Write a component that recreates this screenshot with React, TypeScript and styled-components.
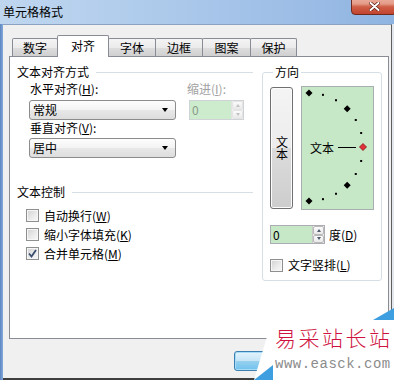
import React from "react";
import styled, { createGlobalStyle } from "styled-components";

const GlobalStyle = createGlobalStyle`
  * { box-sizing: border-box; }
  html, body { margin: 0; padding: 0; background: #ffffff; }
  body {
    font-family: "Noto Sans CJK SC", "Liberation Sans", sans-serif;
    font-size: 12px;
    line-height: 14px;
    color: #000;
  }
`;

const Screen = styled.div`
  position: relative;
  width: 394px;
  height: 380px;
  overflow: hidden;
  display: flex;
  flex-direction: column;
`;

const TitleBar = styled.div`
  height: 24px;
  flex-shrink: 0;
  display: flex;
  align-items: flex-start;
  background: linear-gradient(to right, #bfd6ef 0%, #b0ccec 35%, #a2c1e8 65%, #8fb4e1 100%);
`;

const Title = styled.div`
  padding: 5px 0 0 3px;
  line-height: 14px;
`;

const CloseButton = styled.div`
  margin-left: auto;
  margin-top: -4px;
  margin-right: -3px;
  width: 46px;
  height: 19px;
  border: 1px solid #6e2a1e;
  border-radius: 4px;
  background: linear-gradient(#eeb2a2 0%, #e49b88 40%, #cf5d45 58%, #c24430 100%);
  display: flex;
  align-items: center;
  justify-content: center;
  padding-top: 2px;
`;

const Body = styled.div`
  flex: 1;
  display: flex;
  padding-left: 3px;
  padding-right: 2px;
  background: linear-gradient(to right, #5c86c1 0px, #86aadb 3px, #e4e8ee 3px, #e4e8ee 100%);
`;

const Client = styled.div`
  flex: 1;
  display: flex;
  flex-direction: column;
  background: #f0f0f0;
  border-top: 1px solid #8ca2c0;
  border-right: 1px solid #5f5f5f;
  border-bottom: 2px solid #3e3e3e;
  padding: 10px 0 0 6px;
`;

const TabRow = styled.div`
  display: flex;
  align-items: flex-end;
  height: 21px;
  margin-left: 3px;
  position: relative;
  z-index: 1;
`;

const Tab = styled.div<{ $w: number; $active?: boolean }>`
  width: ${(p) => p.$w}px;
  height: ${(p) => (p.$active ? 22 : 18)}px;
  margin-left: -1px;
  margin-bottom: ${(p) => (p.$active ? -1 : 0)}px;
  padding-bottom: ${(p) => (p.$active ? 2 : 0)}px;
  border: 1px solid #898c95;
  border-bottom: none;
  border-radius: 2px 2px 0 0;
  background: ${(p) =>
    p.$active ? "#ffffff" : "linear-gradient(#f4f4f4 0%, #ebebeb 50%, #dedede 50%, #d0d0d0 100%)"};
  display: flex;
  align-items: center;
  justify-content: center;
  position: relative;
  z-index: ${(p) => (p.$active ? 2 : 1)};
  &:first-child { margin-left: 0; }
`;

const Panel = styled.div`
  width: 380px;
  height: 283px;
  flex-shrink: 0;
  border: 1px solid #898c95;
  background: #ffffff;
  display: grid;
  grid-template-columns: 236px 120px;
  column-gap: 9px;
  align-items: start;
  padding: 9px 0 0 7px;
`;

const Column = styled.div`
  display: flex;
  flex-direction: column;
`;

const SectionHeader = styled.div<{ $mt?: number }>`
  display: flex;
  align-items: center;
  gap: 7px;
  height: 12px;
  line-height: 12px;
  margin-top: ${(p) => p.$mt ?? 0}px;
  &::after {
    content: "";
    flex: 1;
    border-top: 1px solid #d5dfe5;
  }
`;

const AlignGrid = styled.div`
  display: grid;
  grid-template-columns: 147px 55px;
  column-gap: 13px;
  margin: 4px 0 0 12px;
`;

const FieldLabel = styled.div<{ $disabled?: boolean; $mt?: number; $mb?: number; $ml?: number }>`
  height: 14px;
  line-height: 14px;
  padding-left: 1px;
  margin-top: ${(p) => p.$mt ?? 0}px;
  margin-bottom: ${(p) => p.$mb ?? 0}px;
  margin-left: ${(p) => p.$ml ?? 0}px;
  color: ${(p) => (p.$disabled ? "#a2a2a2" : "#000")};
  white-space: nowrap;
`;

const Key = styled.span`
  text-decoration: underline;
`;

const Select = styled.div`
  height: 20px;
  border: 1px solid #8c8c8c;
  border-radius: 3px;
  background: linear-gradient(#fdfdfd 0%, #f3f3f3 50%, #e8e8e8 50%, #dddddd 100%);
  display: flex;
  align-items: center;
  justify-content: space-between;
  padding: 0 7px 0 3px;
`;

const Caret = styled.span`
  width: 0;
  height: 0;
  border-left: 3.5px solid transparent;
  border-right: 3.5px solid transparent;
  border-top: 4px solid #000;
`;

const Spin = styled.div<{ $disabled?: boolean; $h: number }>`
  display: flex;
  width: 55px;
  height: ${(p) => p.$h}px;
  border: 1px solid ${(p) => (p.$disabled ? "#cfd3d6" : "#abadb3")};
  background: ${(p) => (p.$disabled ? "#cdebcd" : "#c7e8c7")};
  color: ${(p) => (p.$disabled ? "#8a9a8a" : "#000")};
`;

const SpinValue = styled.div`
  flex: 1;
  padding-left: 2px;
  display: flex;
  align-items: center;
`;

const SpinButtons = styled.div<{ $disabled?: boolean }>`
  width: 12px;
  display: flex;
  flex-direction: column;
  background: #f4f4f4;
  border-left: 1px solid ${(p) => (p.$disabled ? "#e2e2e2" : "#c8c8c8")};
`;

const SpinHalf = styled.div<{ $disabled?: boolean; $down?: boolean }>`
  flex: 1;
  display: flex;
  align-items: center;
  justify-content: center;
  background: linear-gradient(#fbfbfb, #e9e9e9);
  border: 1px solid ${(p) => (p.$disabled ? "#e4e4e4" : "#b9b9b9")};
  border-radius: 2px;
  &::before {
    content: "";
    width: 0;
    height: 0;
    border-left: 2.5px solid transparent;
    border-right: 2.5px solid transparent;
    ${(p) =>
      p.$down
        ? `border-top: 3px solid ${p.$disabled ? "#c3c3c3" : "#4e5a6e"};`
        : `border-bottom: 3px solid ${p.$disabled ? "#c3c3c3" : "#4e5a6e"};`}
  }
`;

const CheckList = styled.div`
  display: flex;
  flex-direction: column;
  margin: 8px 0 0 9px;
`;

const CheckRow = styled.div<{ $h?: number; $mt?: number }>`
  display: flex;
  align-items: center;
  gap: 5px;
  height: ${(p) => p.$h ?? 19}px;
  margin-top: ${(p) => p.$mt ?? 0}px;
  white-space: nowrap;
`;

const Box = styled.span`
  width: 13px;
  height: 13px;
  flex-shrink: 0;
  border: 1px solid #8e8f8f;
  background: linear-gradient(135deg, #d0d1d3 0%, #ececec 60%, #f8f8f8 100%);
  box-shadow: inset 0 0 0 1px #f6f6f6;
  display: flex;
  align-items: center;
  justify-content: center;
`;

const GroupBox = styled.fieldset`
  margin: 0;
  padding: 8px 0 0 7px;
  border: 1px solid #d5dfe5;
  border-radius: 3px;
  min-width: 0;
  height: 215px;
`;

const Legend = styled.legend`
  padding: 0 2px;
  margin-left: 3px;
  line-height: 12px;
  font-size: 12px;
`;

const DialRow = styled.div`
  display: flex;
  align-items: center;
  gap: 8px;
  height: 124px;
`;

const VertButton = styled.div`
  width: 23px;
  height: 122px;
  border: 1px solid #707070;
  border-radius: 3px;
  background: linear-gradient(#f4f4f4 0%, #ececec 50%, #dcdcdc 50%, #cdcdcd 100%);
  box-shadow: inset 0 0 0 1px #fbfbfb;
  display: flex;
  align-items: center;
  justify-content: center;
  writing-mode: vertical-rl;
  text-orientation: upright;
  line-height: 12px;
`;

const Dial = styled.div`
  position: relative;
  width: 73px;
  height: 124px;
  border: 1px solid #a9aeb1;
  background: #c7e8c7;
  display: flex;
  align-items: center;
  padding-left: 8px;
`;

const DialCanvas = styled.svg`
  position: absolute;
  left: 0;
  top: 0;
`;

const DialText = styled.span`
  position: relative;
`;

const SpinRow = styled.div`
  display: flex;
  align-items: center;
  gap: 4px;
  margin-top: 15px;
`;

const Footer = styled.div`
  display: flex;
  justify-content: flex-end;
  gap: 5px;
  padding: 12px 2px 0 0;
`;

const DialogButton = styled.div<{ $default?: boolean }>`
  width: 75px;
  height: 20px;
  border: 1px solid ${(p) => (p.$default ? "#3c7fb1" : "#707070")};
  border-radius: 3px;
  background: ${(p) =>
    p.$default
      ? "linear-gradient(#e5f4fc 0%, #c4e5f6 50%, #98d1ef 50%, #6ec2ee 100%)"
      : "linear-gradient(#f2f2f2 0%, #ebebeb 50%, #dddddd 50%, #cfcfcf 100%)"};
  box-shadow: inset 0 0 0 1px ${(p) => (p.$default ? "#a8dcf6" : "#fcfcfc")};
`;

const Watermark = styled.div`
  position: absolute;
  right: 0;
  bottom: 0;
  width: 142px;
  height: 74px;
  display: flex;
  flex-direction: column;
  padding: 19px 0 0 23px;
`;

const WatermarkShape = styled.svg`
  position: absolute;
  left: 0;
  top: 0;
`;

const WatermarkTitle = styled.div`
  position: relative;
  font-family: "Noto Sans CJK SC", sans-serif;
  font-size: 21px;
  font-weight: 300;
  line-height: 24px;
  letter-spacing: 2.5px;
  color: #cf1340;
  white-space: nowrap;
`;

const WatermarkUrl = styled.div`
  position: relative;
  margin-top: 8px;
  font-family: "Liberation Mono", monospace;
  font-size: 14px;
  line-height: 14px;
  letter-spacing: 0.5px;
  color: #8c8c8c;
  white-space: nowrap;
`;

const mn = (text: string, key: string, colon = false) => (
  <span>
    {text}(<Key>{key}</Key>){colon ? ":" : ""}
  </span>
);

const tabs = [
  { label: "数字", w: 46 },
  { label: "对齐", w: 52, active: true },
  { label: "字体", w: 48 },
  { label: "边框", w: 48 },
  { label: "图案", w: 49 },
  { label: "保护", w: 47 },
];

const Check = () => (
  <svg width="9" height="9" viewBox="0 0 9 9">
    <path d="M1 4.5 L3.5 7.5 L8 1" fill="none" stroke="#3a4e6e" strokeWidth="1.8" />
  </svg>
);

const dialMarks = () => {
  const cx = 7;
  const cy = 60;
  const r = 54;
  const items: React.ReactNode[] = [];
  for (let a = 90; a >= -90; a -= 15) {
    const rad = (a * Math.PI) / 180;
    const x = cx + r * Math.cos(rad);
    const y = cy - r * Math.sin(rad);
    if (a === 0) {
      items.push(
        <polygon
          key={a}
          points={`${x},${y - 3.5} ${x + 3.5},${y} ${x},${y + 3.5} ${x - 3.5},${y}`}
          fill="#e0303c"
          stroke="#8a1010"
          strokeWidth="0.8"
        />
      );
    } else if (a % 45 === 0) {
      items.push(
        <polygon
          key={a}
          points={`${x},${y - 3.5} ${x + 3.5},${y} ${x},${y + 3.5} ${x - 3.5},${y}`}
          fill="#000"
        />
      );
    } else {
      items.push(<rect key={a} x={x - 1} y={y - 1} width="2" height="2" fill="#000" />);
    }
  }
  return items;
};

export default function App() {
  return (
    <>
      <GlobalStyle />
      <Screen>
        <TitleBar>
          <Title>单元格格式</Title>
          <CloseButton>
            <svg width="11" height="9" viewBox="0 0 11 9">
              <path d="M1.5 1 L9.5 8 M9.5 1 L1.5 8" stroke="#5a1c12" strokeWidth="3.4" strokeLinecap="round" />
              <path d="M1.5 1 L9.5 8 M9.5 1 L1.5 8" stroke="#ffffff" strokeWidth="2" strokeLinecap="round" />
            </svg>
          </CloseButton>
        </TitleBar>
        <Body>
          <Client>
            <TabRow>
              {tabs.map((t) => (
                <Tab key={t.label} $w={t.w} $active={t.active}>
                  {t.label}
                </Tab>
              ))}
            </TabRow>
            <Panel>
              <Column>
                <SectionHeader>文本对齐方式</SectionHeader>
                <AlignGrid>
                  <FieldLabel $mb={4}>{mn("水平对齐", "H", true)}</FieldLabel>
                  <FieldLabel $mb={4} $ml={-3} $disabled>
                    {mn("缩进", "I", true)}
                  </FieldLabel>
                  <Select>
                    常规
                    <Caret />
                  </Select>
                  <Spin $disabled $h={20}>
                    <SpinValue>0</SpinValue>
                    <SpinButtons $disabled>
                      <SpinHalf $disabled />
                      <SpinHalf $disabled $down />
                    </SpinButtons>
                  </Spin>
                  <FieldLabel $mt={1} $mb={3}>{mn("垂直对齐", "V", true)}</FieldLabel>
                  <div />
                  <Select>
                    居中
                    <Caret />
                  </Select>
                </AlignGrid>
                <SectionHeader $mt={28}>文本控制</SectionHeader>
                <CheckList>
                  <CheckRow>
                    <Box />
                    {mn("自动换行", "W")}
                  </CheckRow>
                  <CheckRow>
                    <Box />
                    {mn("缩小字体填充", "K")}
                  </CheckRow>
                  <CheckRow>
                    <Box>
                      <Check />
                    </Box>
                    {mn("合并单元格", "M")}
                  </CheckRow>
                </CheckList>
              </Column>
              <GroupBox>
                <Legend>方向</Legend>
                <DialRow>
                  <VertButton>文本</VertButton>
                  <Dial>
                    <DialCanvas width="71" height="122" viewBox="0 0 71 122">
                      {dialMarks()}
                      <line x1="36" y1="60.5" x2="54" y2="60.5" stroke="#000" strokeWidth="1" />
                    </DialCanvas>
                    <DialText>文本</DialText>
                  </Dial>
                </DialRow>
                <SpinRow>
                  <Spin $h={19}>
                    <SpinValue>0</SpinValue>
                    <SpinButtons>
                      <SpinHalf />
                      <SpinHalf $down />
                    </SpinButtons>
                  </Spin>
                  {mn("度", "D")}
                </SpinRow>
                <CheckRow $h={14} $mt={14}>
                  <Box />
                  {mn("文字竖排", "L")}
                </CheckRow>
              </GroupBox>
            </Panel>
            <Footer>
              <DialogButton $default />
              <DialogButton />
            </Footer>
          </Client>
        </Body>
        <Watermark>
          <WatermarkShape width="142" height="74" viewBox="0 0 142 74">
            <polygon points="20,14 142,14 142,74 2,74" fill="#ffffff" />
            <polygon points="121,14 142,2 142,14" fill="#3d9fe0" />
            <polygon points="2,74 21,59 21,74" fill="#3d9fe0" />
          </WatermarkShape>
          <WatermarkTitle>易采站长站</WatermarkTitle>
          <WatermarkUrl>www.easck.com</WatermarkUrl>
        </Watermark>
      </Screen>
    </>
  );
}
